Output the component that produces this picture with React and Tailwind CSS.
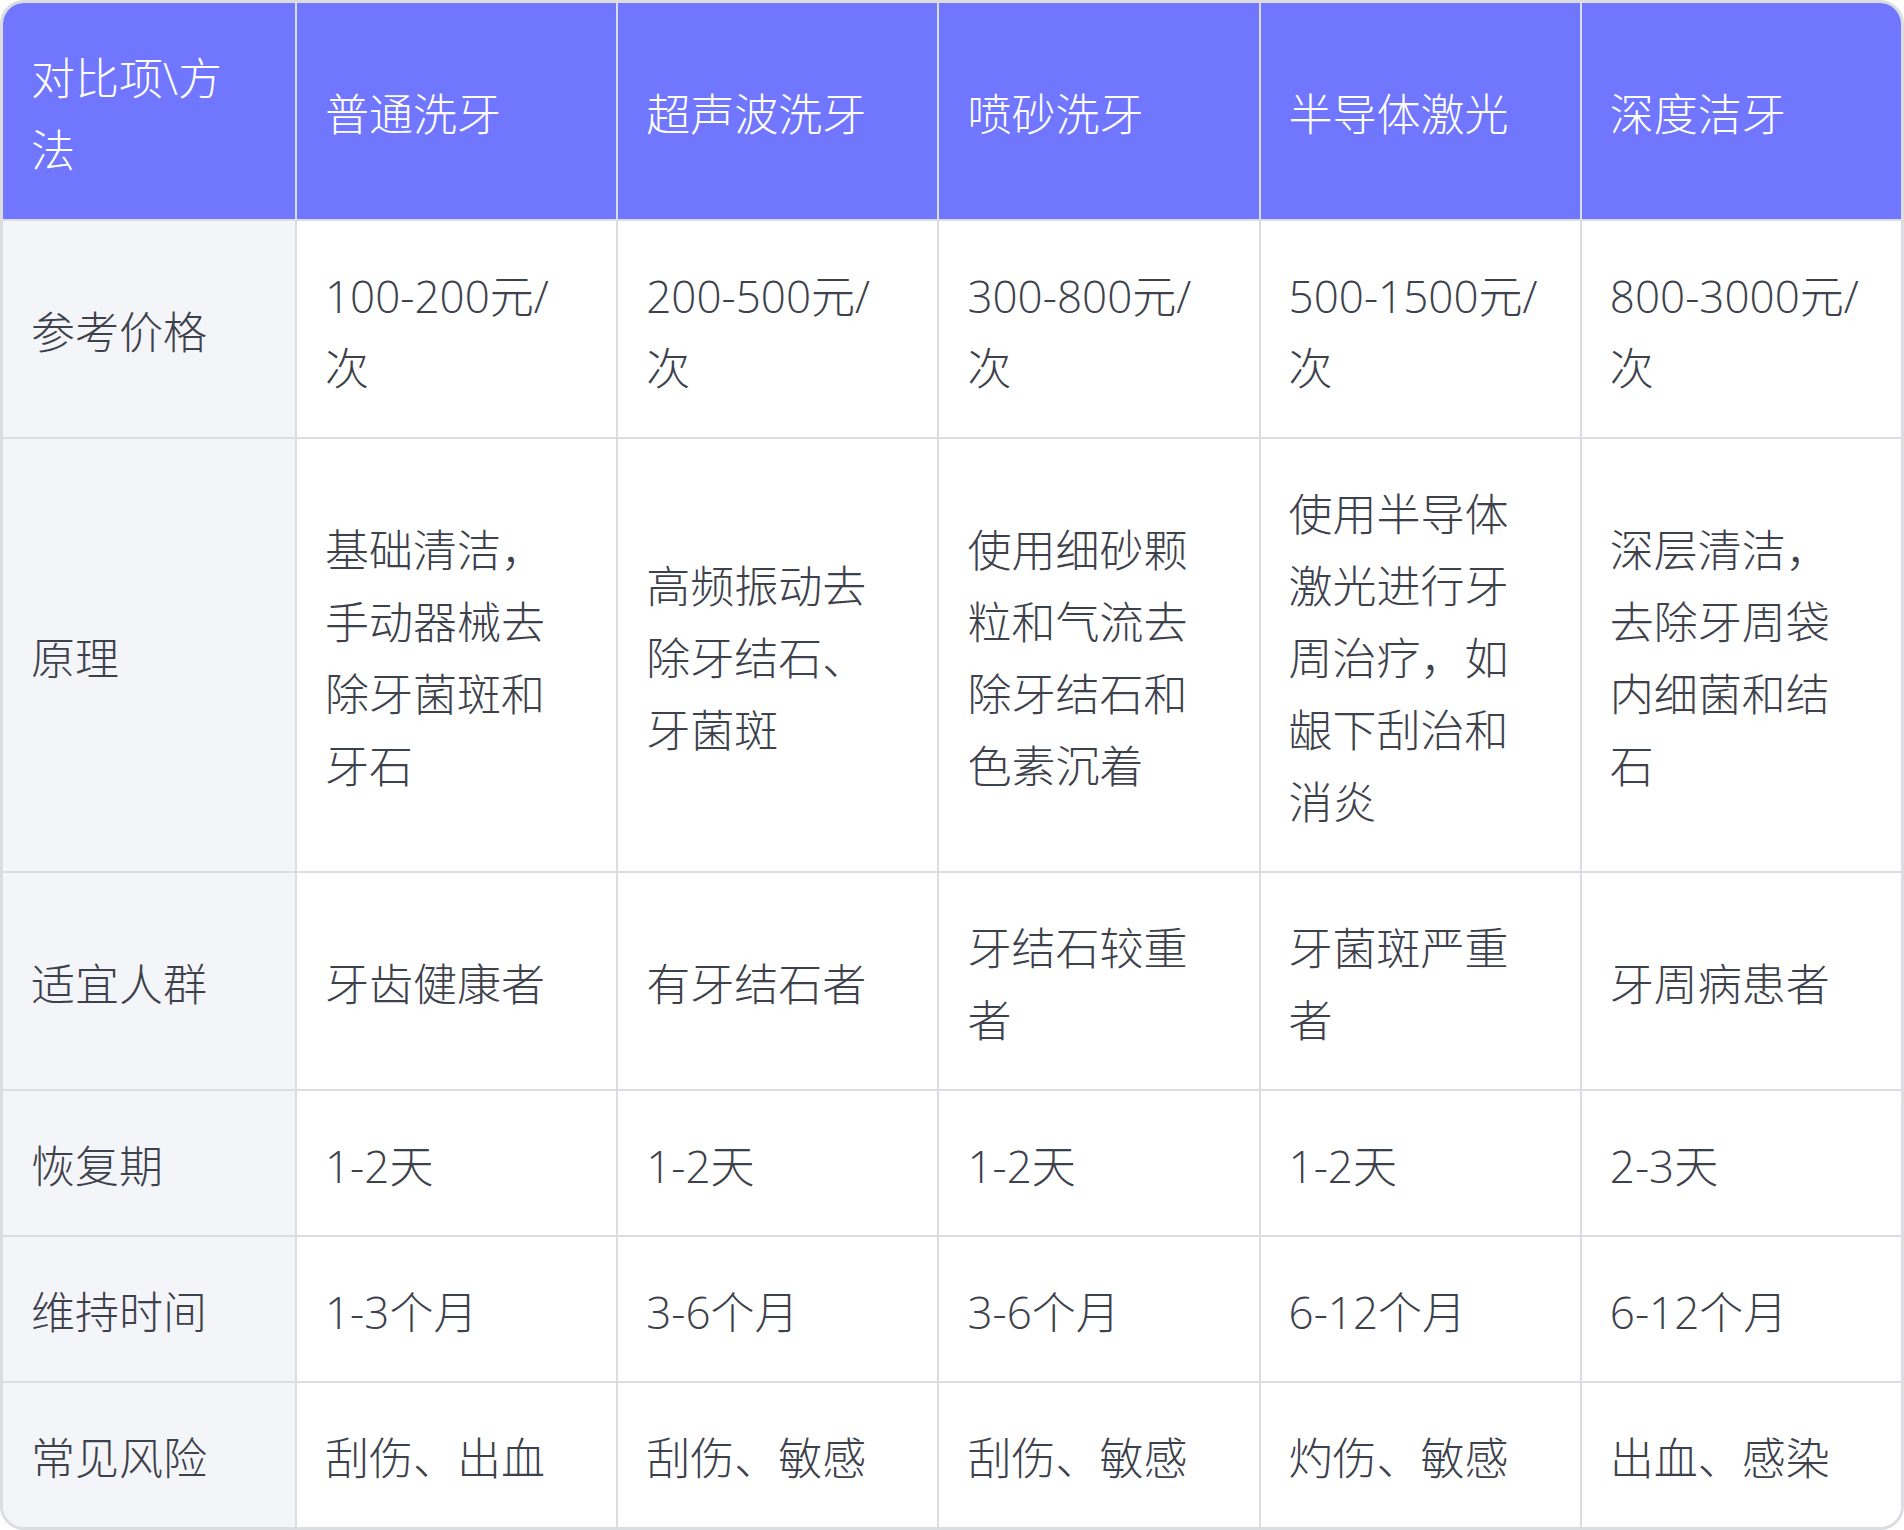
import React from "react";

const header = ["对比项\\方法", "普通洗牙", "超声波洗牙", "喷砂洗牙", "半导体激光", "深度洁牙"];
const rows = [
  ["参考价格", "100-200元/次", "200-500元/次", "300-800元/次", "500-1500元/次", "800-3000元/次"],
  ["原理", "基础清洁，手动器械去除牙菌斑和牙石", "高频振动去除牙结石、牙菌斑", "使用细砂颗粒和气流去除牙结石和色素沉着", "使用半导体激光进行牙周治疗，如龈下刮治和消炎", "深层清洁，去除牙周袋内细菌和结石"],
  ["适宜人群", "牙齿健康者", "有牙结石者", "牙结石较重者", "牙菌斑严重者", "牙周病患者"],
  ["恢复期", "1-2天", "1-2天", "1-2天", "1-2天", "2-3天"],
  ["维持时间", "1-3个月", "3-6个月", "3-6个月", "6-12个月", "6-12个月"],
  ["常见风险", "刮伤、出血", "刮伤、敏感", "刮伤、敏感", "灼伤、敏感", "出血、感染"],
];

export default function App() {
  return (
    <div
      className="w-[1904px] bg-white"
      style={{ fontFamily: '"Open Sans", "Noto Sans CJK SC", sans-serif' }}
    >
      <div className="overflow-hidden rounded-3xl border-[3px] border-[#dcdde2]">
        <div className="grid grid-cols-[292px_repeat(5,minmax(0,1fr))] text-[44px] font-light leading-[72px]">
          {header.map((h, i) => (
            <div
              key={i}
              className={`flex items-center bg-[#7176ff] px-[28px] pt-[39px] pb-[33px] text-white ${i > 0 ? "border-l-2 border-[#dcdde2]" : ""}`}
            >
              <span className={i === 0 ? "max-w-[205px]" : ""}>{h}</span>
            </div>
          ))}
          {rows.map((r, ri) =>
            r.map((c, ci) => (
              <div
                key={`${ri}-${ci}`}
                className={`flex items-center border-t-2 border-[#dcdde2] px-[28px] pt-[39px] pb-[33px] text-[#3d414c] ${ci > 0 ? "border-l-2 bg-white" : "bg-[#f4f5f9]"}`}
              >
                <span>{c}</span>
              </div>
            ))
          )}
        </div>
      </div>
    </div>
  );
}
